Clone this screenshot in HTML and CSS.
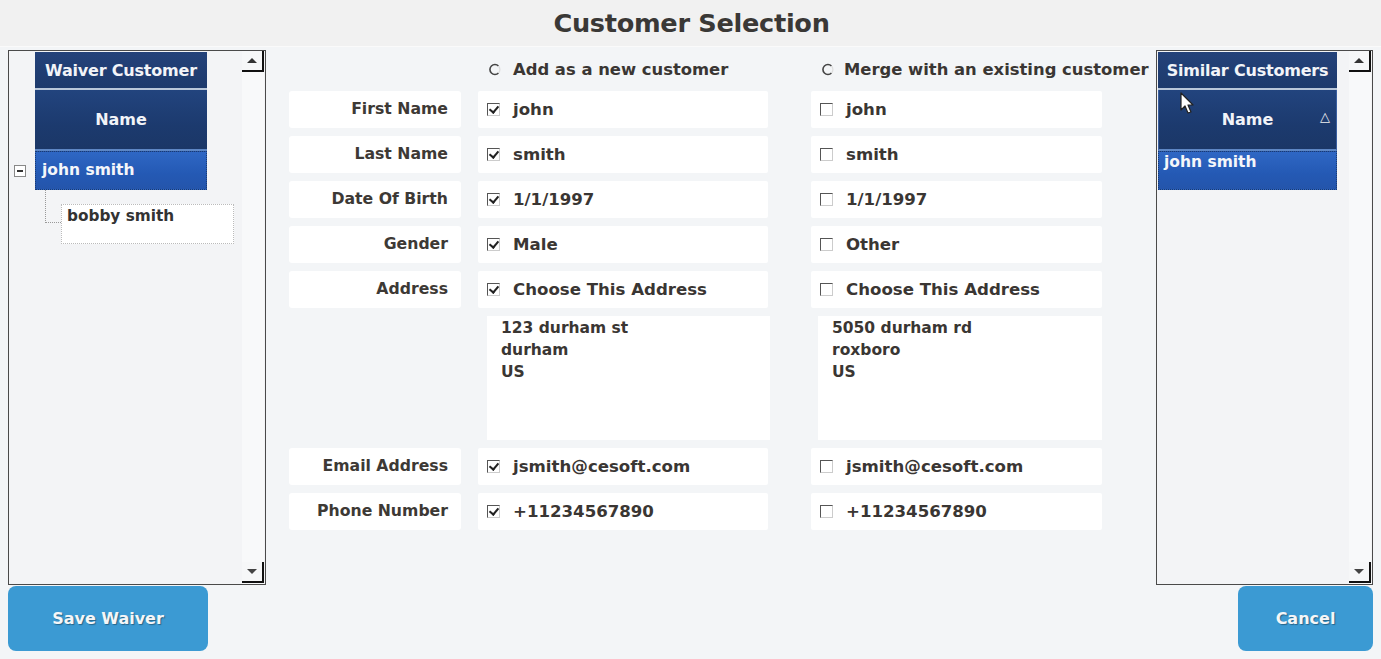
FILE: index.html
```html
<!DOCTYPE html>
<html>
<head>
<meta charset="utf-8">
<link rel="stylesheet" href="styles.css">
</head>
<body>
<div class="titlebar"><h1 class="title">Customer Selection</h1></div>
<div class="main">
  <div class="panel left-panel">
    <div class="tree">
      <div class="grid-head">Waiver Customer</div>
      <div class="grid-col">Name</div>
      <div class="tree-row">
        <span class="expander"></span>
        <div class="sel-row">john smith</div>
      </div>
      <div class="child-wrap">
        <div class="child-line"></div>
        <div class="child-row">bobby smith</div>
      </div>
    </div>
    <div class="scrollbar">
      <div class="sb-btn up"><span class="tri-up"></span></div>
      <div class="sb-track"></div>
      <div class="sb-btn down"><span class="tri-down"></span></div>
    </div>
  </div>

  <div class="middle">
    <div class="form">
      <div class="radio-row">
        <div></div>
        <label class="radio"><svg class="rb" width="13" height="13" viewBox="0 0 13 13"><path d="M10.5 3 A5 5 0 1 0 10.5 10" fill="none" stroke="#444" stroke-width="1.6"/><path d="M10.5 10 A5 5 0 0 0 10.5 3" fill="none" stroke="#ddd" stroke-width="1.2"/></svg>Add as a new customer</label>
        <label class="radio"><svg class="rb" width="13" height="13" viewBox="0 0 13 13"><path d="M10.5 3 A5 5 0 1 0 10.5 10" fill="none" stroke="#444" stroke-width="1.6"/><path d="M10.5 10 A5 5 0 0 0 10.5 3" fill="none" stroke="#ddd" stroke-width="1.2"/></svg>Merge with an existing customer</label>
      </div>

      <div class="lbl">First Name</div>
      <div class="val"><span class="cb on"></span>john</div>
      <div class="val rv"><span class="cb"></span>john</div>

      <div class="lbl">Last Name</div>
      <div class="val"><span class="cb on"></span>smith</div>
      <div class="val rv"><span class="cb"></span>smith</div>

      <div class="lbl">Date Of Birth</div>
      <div class="val"><span class="cb on"></span>1/1/1997</div>
      <div class="val rv"><span class="cb"></span>1/1/1997</div>

      <div class="lbl">Gender</div>
      <div class="val"><span class="cb on"></span>Male</div>
      <div class="val rv"><span class="cb"></span>Other</div>

      <div class="lbl">Address</div>
      <div class="val"><span class="cb on"></span>Choose This Address</div>
      <div class="val rv"><span class="cb"></span>Choose This Address</div>

      <div class="blank"></div>
      <div class="addr left-addr">123 durham st<br>durham<br>US</div>
      <div class="addr right-addr">5050 durham rd<br>roxboro<br>US</div>

      <div class="lbl">Email Address</div>
      <div class="val"><span class="cb on"></span>jsmith@cesoft.com</div>
      <div class="val rv"><span class="cb"></span>jsmith@cesoft.com</div>

      <div class="lbl">Phone Number</div>
      <div class="val"><span class="cb on"></span>+11234567890</div>
      <div class="val rv"><span class="cb"></span>+11234567890</div>
    </div>
  </div>

  <div class="panel right-panel">
    <div class="tree right-tree">
      <div class="grid-head">Similar Customers</div>
      <div class="grid-col">Name<span class="sort-tri">&#9651;</span></div>
      <div class="sel-row">john smith</div>
    </div>
    <div class="scrollbar">
      <div class="sb-btn up"><span class="tri-up"></span></div>
      <div class="sb-track"></div>
      <div class="sb-btn down"><span class="tri-down"></span></div>
    </div>
    <svg class="cursor" width="16" height="24" viewBox="0 0 16 24"><path d="M1 1 L1 18 L5 14 L8 21 L11 20 L8 13 L13 13 Z" fill="#fff" stroke="#222" stroke-width="1.2" stroke-linejoin="round"/></svg>
  </div>
</div>
<div class="footer">
  <button class="btn save">Save Waiver</button>
  <button class="btn cancel">Cancel</button>
</div>
</body>
</html>
```

FILE: styles.css
```css
* { box-sizing: border-box; }
html, body { margin: 0; padding: 0; }
body {
  width: 1381px;
  height: 659px;
  overflow: hidden;
  background: #f3f5f7;
  font-family: "DejaVu Sans", Verdana, sans-serif;
  font-weight: bold;
  color: #3a3633;
}
.titlebar {
  height: 47px;
  background: #f1f1f1;
  border-bottom: 1px solid #fafafa;
  display: flex;
  align-items: center;
  justify-content: center;
}
.title {
  margin: 0;
  font-size: 25.6px;
  font-weight: bold;
  color: #3a3836;
  letter-spacing: -0.3px;
  padding-left: 2px;
}
.main {
  display: flex;
  height: 535px;
  margin-top: 3px;
  padding: 0 8px;
}
.panel {
  position: relative;
  border: 1px solid #4a4a4a;
  background: #f3f4f6;
  display: flex;
  height: 535px;
}
.left-panel { width: 258px; }
.right-panel { width: 217px; }
.tree {
  flex: 1;
  padding-top: 1px;
}
.left-panel .tree { padding-left: 26px; }
.right-tree { padding-left: 1px; }
.grid-head {
  width: 172px;
  height: 38px;
  background: linear-gradient(#24427a, #1d3a6c);
  color: #f2f4f8;
  font-size: 16px;
  display: flex;
  align-items: center;
  justify-content: center;
  border-bottom: 2px solid #b9c7d9;
  letter-spacing: -0.2px;
}
.right-tree .grid-head { width: 179px; }
.grid-col {
  position: relative;
  width: 172px;
  height: 61px;
  background: linear-gradient(#22447e, #1c3a6e 60%, #1b3767);
  color: #f2f4f8;
  font-size: 16px;
  display: flex;
  align-items: center;
  justify-content: center;
  border-bottom: 2px solid #5d86c4;
}
.right-tree .grid-col { width: 179px; border-left: 1px solid #3a5fa0; border-right: 1px solid #3a5fa0; }
.sort-tri {
  position: absolute;
  right: 6px;
  top: 19px;
  font-size: 13px;
  color: #f0f0f0;
}
.tree-row {
  position: relative;
}
.expander {
  position: absolute;
  left: -21px;
  top: 14px;
  width: 12px;
  height: 12px;
  border: 1px solid #888;
  background: #fff;
}
.expander::after {
  content: "";
  position: absolute;
  left: 2px;
  top: 4px;
  width: 6px;
  height: 2px;
  background: #333;
}
.sel-row {
  width: 172px;
  height: 39px;
  background: linear-gradient(#2f67c4, #2459b4 60%, #2455ab);
  color: #f4f6fa;
  font-size: 15.5px;
  padding: 9px 0 0 6px;
  border: 1px dotted #1a3a70;
}
.right-tree .sel-row { width: 179px; padding-left: 5px; padding-top: 1px; }
.child-wrap {
  position: relative;
  padding: 14px 0 0 26px;
}
.child-line {
  position: absolute;
  left: 10px;
  top: 0;
  width: 16px;
  height: 33px;
  border-left: 1px dotted #999;
  border-bottom: 1px dotted #999;
}
.child-row {
  width: 173px;
  height: 40px;
  background: #fff;
  border: 1px dotted #bbb;
  font-size: 15.3px;
  padding: 2px 0 0 5px;
  color: #333;
}
.scrollbar {
  width: 22px;
  display: flex;
  flex-direction: column;
  background: #f8f9fa;
  margin-right: 1px;
}
.sb-btn {
  height: 21px;
  display: flex;
  align-items: center;
  justify-content: center;
  border-right: 2px solid #111;
  border-bottom: 2px solid #111;
  background: #f6f7f8;
}
.sb-btn.down { margin-bottom: 1px; }
.sb-track { flex: 1; }
.tri-up {
  width: 0; height: 0;
  border-left: 5px solid transparent;
  border-right: 5px solid transparent;
  border-bottom: 5px solid #333;
}
.tri-down {
  width: 0; height: 0;
  border-left: 5px solid transparent;
  border-right: 5px solid transparent;
  border-top: 5px solid #444;
}
.cursor {
  position: absolute;
  left: 23px;
  top: 41px;
}
.middle {
  flex: 1;
  padding-left: 23px;
}
.form {
  display: grid;
  grid-template-columns: 172px 290px 317px;
  column-gap: 17px;
  grid-template-rows: 33px 37px 37px 37px 37px 37px 124px 37px 37px;
  row-gap: 8px;
}
.radio-row {
  grid-column: 1 / 4;
  display: grid;
  grid-template-columns: 172px 290px 340px;
  column-gap: 17px;
  align-items: center;
  padding-top: 6px;
  font-size: 16.4px;
}
.radio {
  display: flex;
  align-items: center;
  gap: 12px;
  padding-left: 10px;
  white-space: nowrap;
  color: #3a3633;
}
.rb { flex: none; }
.radio-row .radio:last-child { padding-left: 36px; gap: 10px; }
.lbl {
  background: #fff;
  border-radius: 3px;
  font-size: 15.7px;
  text-align: right;
  padding: 8px 13px 0 0;
  color: #3d3935;
}
.val {
  background: #fff;
  border-radius: 2px;
  font-size: 16.6px;
  display: flex;
  align-items: center;
  padding-left: 9px;
  gap: 13px;
  white-space: nowrap;
  color: #3a3633;
}
.rv { margin-left: 26px; }
.cb {
  position: relative;
  width: 13px;
  height: 13px;
  border: 1px solid #555;
  border-right-color: #ccc;
  border-bottom-color: #ccc;
  background: #fff;
  flex: none;
}
.cb.on::after {
  content: "";
  position: absolute;
  left: 3px;
  top: 0px;
  width: 4px;
  height: 7px;
  border-right: 2px solid #222;
  border-bottom: 2px solid #222;
  transform: rotate(40deg);
}
.addr {
  background: #fff;
  font-size: 15.5px;
  line-height: 22px;
  padding: 1px 0 0 14px;
  color: #3a3633;
}
.left-addr { margin-left: 9px; margin-right: -2px; }
.right-addr { margin-left: 33px; }
.footer {
  display: flex;
  justify-content: space-between;
  padding: 1px 8px 0 8px;
}
.btn {
  height: 65px;
  border: none;
  border-radius: 8px;
  background: #3b9ad3;
  color: #f4f6f8;
  font-family: "DejaVu Sans", Verdana, sans-serif;
  font-weight: bold;
  font-size: 16px;
  text-shadow: 1px 1px 1px rgba(0,0,0,0.35);
}
.save { width: 200px; }
.cancel { width: 135px; }
```
